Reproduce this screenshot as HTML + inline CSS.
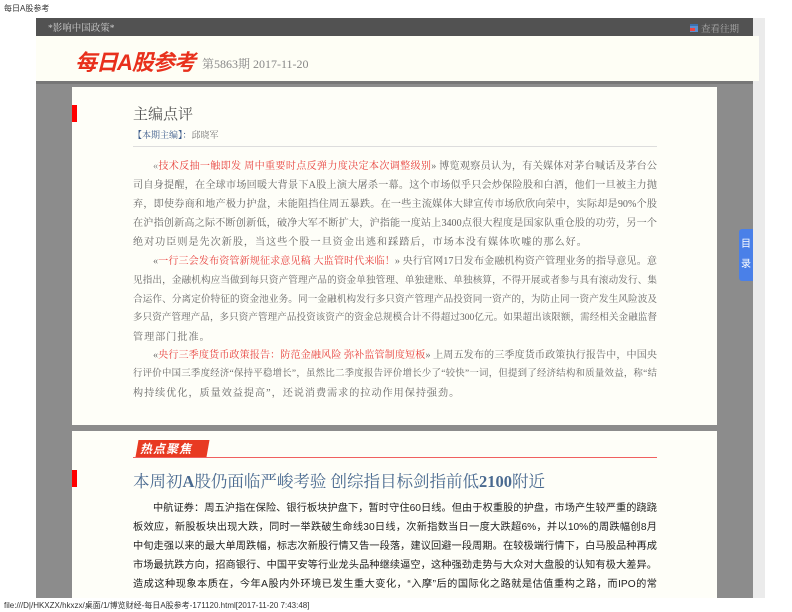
<!DOCTYPE html>
<html><head><meta charset="utf-8"><style>
*{margin:0;padding:0;box-sizing:border-box}
body{width:792px;height:612px;background:#fff;position:relative;overflow:hidden;font-family:"Liberation Serif","Noto Serif CJK SC",serif}
.abs{position:absolute}
.ln{position:absolute;left:133px;width:524px;height:19px;font-size:10.1px;color:#666;white-space:nowrap;text-align:justify;text-align-last:justify;line-height:19px}
.ln.l{text-align-last:left;letter-spacing:1px}
.ln.i{left:153px;width:504px}
.r{color:#e8403c}
.s{font-family:"Liberation Sans","Noto Sans CJK SC",sans-serif;color:#222;font-size:10.2px}
</style></head><body>
<div class="abs" style="left:4px;top:3px;font-size:8px;color:#333;font-family:'Liberation Sans','Noto Sans CJK SC',sans-serif">每日A股参考</div>
<div class="abs" style="left:36px;top:18px;width:717px;height:18px;background:#525252"></div>
<div class="abs" style="left:753px;top:18px;width:12px;height:580px;background:#ebebeb"></div>
<div class="abs" style="left:48px;top:20px;font-size:9.5px;color:#ccc">*影响中国政策*</div>
<div class="abs" style="left:690px;top:24px;width:8px;height:8px;background:#5a8fd0;border-top:2px solid #3a6fb0"></div>
<div class="abs" style="left:690px;top:28px;width:5px;height:3px;background:#e44"></div>
<div class="abs" style="left:701px;top:21px;font-size:9.5px;color:#aaa">查看往期</div>
<div class="abs" style="left:36px;top:36px;width:723px;height:45px;background:#fefef5"></div>
<div class="abs" style="left:75px;top:45px;font-size:22px;font-weight:bold;font-style:italic;color:#e8301c;font-family:'Liberation Sans','Noto Sans CJK SC',sans-serif;letter-spacing:-1px">每日A股参考</div>
<div class="abs" style="left:202px;top:55px;font-size:12px;color:#888">第5863期 2017-11-20</div>
<div class="abs" style="left:36px;top:81px;width:717px;height:517px;background:#8c8c8c"></div>
<div class="abs" style="left:36px;top:81px;width:717px;height:3px;background:#777"></div>
<div class="abs" style="left:72px;top:87px;width:645px;height:338px;background:#fefef8"></div>
<div class="abs" style="left:72px;top:431px;width:645px;height:167px;background:#fefef8"></div>
<div class="abs" style="left:72px;top:105px;width:5px;height:17px;background:#f00"></div>
<div class="abs" style="left:72px;top:470px;width:5px;height:17px;background:#f00"></div>
<div class="abs" style="left:739px;top:229px;width:14px;height:52px;background:#4a80e8;border-radius:3px 0 0 3px;color:#fff;font-size:10px;text-align:center;line-height:20px;padding-top:6px;font-family:'Liberation Sans','Noto Sans CJK SC',sans-serif">目<br>录</div>
<div class="abs" style="left:133px;top:103px;font-size:15px;color:#555">主编点评</div>
<div class="abs" style="left:133px;top:128px;font-size:9px;color:#3a5a8a">【本期主编】：<span style="color:#777">邱晓军</span></div>
<div class="abs" style="left:133px;top:146px;width:524px;height:1px;background:#ddd"></div>
<div class="ln i" style="top:157px"><span style="color:#888">«</span><span class="r">技术反抽一触即发 周中重要时点反弹力度决定本次调整级别</span>» 博览观察员认为，有关媒体对茅台喊话及茅台公</div>
<div class="ln" style="top:176px">司自身提醒，在全球市场回暖大背景下A股上演大屠杀一幕。这个市场似乎只会炒保险股和白酒，他们一旦被主力抛</div>
<div class="ln" style="top:195px">弃，即使券商和地产极力护盘，未能阻挡住周五暴跌。在一些主流媒体大肆宣传市场欣欣向荣中，实际却是90%个股</div>
<div class="ln" style="top:214px">在沪指创新高之际不断创新低，破净大军不断扩大，沪指能一度站上3400点很大程度是国家队重仓股的功劳，另一个</div>
<div class="ln l" style="top:233px">绝对功臣则是先次新股，当这些个股一旦资金出逃和踩踏后，市场本没有媒体吹嘘的那么好。</div>
<div class="ln i" style="top:252px">«<span class="r">一行三会发布资管新规征求意见稿 大监管时代来临！</span>» 央行官网17日发布金融机构资产管理业务的指导意见。意</div>
<div class="ln" style="top:271px;font-size:9.6px">见指出，金融机构应当做到每只资产管理产品的资金单独管理、单独建账、单独核算，不得开展或者参与具有滚动发行、集</div>
<div class="ln" style="top:290px;font-size:9.6px">合运作、分离定价特征的资金池业务。同一金融机构发行多只资产管理产品投资同一资产的，为防止同一资产发生风险波及</div>
<div class="ln" style="top:309px;font-size:9.5px">多只资产管理产品，多只资产管理产品投资该资产的资金总规模合计不得超过300亿元。如果超出该限额，需经相关金融监督</div>
<div class="ln l" style="top:328px">管理部门批准。</div>
<div class="ln i" style="top:346px">«<span class="r">央行三季度货币政策报告：防范金融风险 弥补监管制度短板</span>» 上周五发布的三季度货币政策执行报告中，中国央</div>
<div class="ln" style="top:365px;font-size:9.4px">行评价中国三季度经济“保持平稳增长”，虽然比二季度报告评价增长少了“较快”一词，但提到了经济结构和质量效益，称“结</div>
<div class="ln l" style="top:384px">构持续优化，质量效益提高”，还说消费需求的拉动作用保持强劲。</div>
<div class="abs" style="left:137px;top:440px;width:71px;height:17px;background:#e83a22;transform:skewX(-10deg)"></div>
<div class="abs" style="left:140px;top:440px;font-size:12px;color:#fff;font-style:italic;font-weight:bold;font-family:'Liberation Sans','Noto Sans CJK SC',sans-serif;letter-spacing:1px">热点聚焦</div>
<div class="abs" style="left:133px;top:457px;width:524px;height:1px;background:#f06060"></div>
<div class="abs" style="left:133px;top:468px;font-size:16.5px;color:#4a6a90">本周初<b>A</b>股仍面临严峻考验 创综指目标剑指前低<b>2100</b>附近</div>
<div class="ln i s" style="top:499px">中航证券：周五沪指在保险、银行板块护盘下，暂时守住60日线。但由于权重股的护盘，市场产生较严重的跷跷</div>
<div class="ln s" style="top:518px">板效应，新股板块出现大跌，同时一举跌破生命线30日线，次新指数当日一度大跌超6%，并以10%的周跌幅创8月</div>
<div class="ln s" style="top:537px">中旬走强以来的最大单周跌幅，标志次新股行情又告一段落，建议回避一段周期。在较极端行情下，白马股品种再成</div>
<div class="ln s" style="top:556px">市场最抗跌方向，招商银行、中国平安等行业龙头品种继续逼空，这种强劲走势与大众对大盘股的认知有极大差异。</div>
<div class="ln s" style="top:575px">造成这种现象本质在，今年A股内外环境已发生重大变化，“入摩”后的国际化之路就是估值重构之路，而IPO的常</div>
<div class="abs" style="left:0;top:598px;width:792px;height:14px;background:#fff"></div>
<div class="abs" style="left:4px;top:600px;font-size:8px;color:#333;font-family:'Liberation Sans','Noto Sans CJK SC',sans-serif">file:///D|/HKXZX/hkxzx/桌面/1/博览财经-每日A股参考-171120.html[2017-11-20 7:43:48]</div>
</body></html>
